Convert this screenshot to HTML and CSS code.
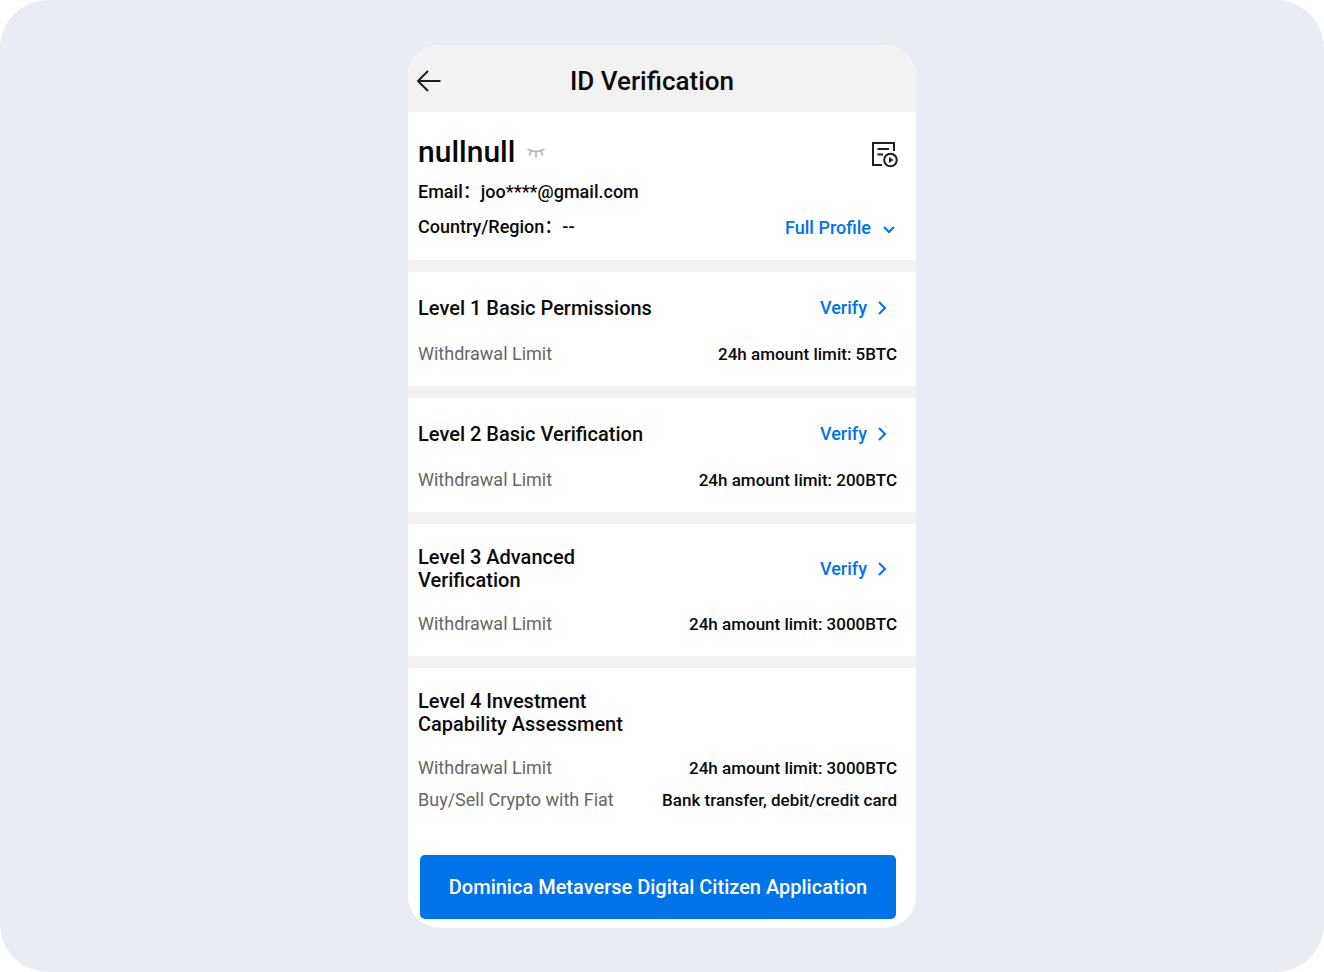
FILE: index.html
```
<!DOCTYPE html>
<html lang="en">
<head>
    <meta charset="UTF-8">
    <meta name="viewport" content="width=device-width, initial-scale=1.0">
    <title>ID Verification</title>
    <link rel="stylesheet" href="styles.css">
</head>
<body>
    <div class="page">
        <main class="phone">
            <header class="top-bar">
                <button type="button" class="icon-button" aria-label="Back">
                    <svg width="26" height="24" viewBox="0 0 26 24" fill="none" stroke="#1e1e1e" stroke-width="2">
                        <path d="M24.500 12H2M12 2L2 12l10 10"/>
                    </svg>
                </button>
                <h1>ID Verification</h1>
            </header>

            <section class="profile">
                <div class="profile-row">
                    <div class="profile-name">
                        <h2>nullnull</h2>
                        <button type="button" class="icon-button" aria-label="Show name">
                            <svg width="20" height="14" viewBox="1 -2 20 14" fill="none" stroke="#b9bcc1" stroke-width="2">
                                <path d="M1.500 2q8.500 5 17 0M5 4L3.500 8.500M10 5v5.500M15 4l1.500 4.500"/>
                            </svg>
                        </button>
                    </div>
                    <button type="button" class="icon-button" aria-label="Verification records">
                        <svg width="28" height="32" viewBox="1 -4 28 32" fill="none" stroke="#1e1e1e" stroke-width="2">
                            <path d="M13 25H4V3h21v8M8.500 9H20M8.500 14.500H14"/>
                            <circle cx="21.500" cy="20" r="6.300"/>
                            <path d="M20 17l4.500 3-4.500 3z" fill="#1e1e1e" stroke="none"/>
                        </svg>
                    </button>
                </div>
                <p class="profile-line">Email：joo****@gmail.com</p>
                <div class="profile-row">
                    <p class="profile-line">Country/Region：--</p>
                    <button type="button" class="full-profile">
                        Full Profile
                        <svg width="12" height="12" viewBox="0 -4 12 12" fill="none" stroke="currentColor" stroke-width="2">
                            <path d="M1 1l5 5 5-5"/>
                        </svg>
                    </button>
                </div>
            </section>

            <section class="level">
                <div class="level-head">
                    <h3>Level 1 Basic Permissions</h3>
                    <a href="#" class="verify">Verify
                        <svg width="10" height="14" viewBox="0 0 10 14" fill="none" stroke="currentColor" stroke-width="2">
                            <path d="M2 1l6 6-6 6"/>
                        </svg>
                    </a>
                </div>
                <dl class="limits">
                    <div class="limit"><dt>Withdrawal Limit</dt><dd>24h amount limit: 5BTC</dd></div>
                </dl>
            </section>

            <section class="level">
                <div class="level-head">
                    <h3>Level 2 Basic Verification</h3>
                    <a href="#" class="verify">Verify
                        <svg width="10" height="14" viewBox="0 0 10 14" fill="none" stroke="currentColor" stroke-width="2">
                            <path d="M2 1l6 6-6 6"/>
                        </svg>
                    </a>
                </div>
                <dl class="limits">
                    <div class="limit"><dt>Withdrawal Limit</dt><dd>24h amount limit: 200BTC</dd></div>
                </dl>
            </section>

            <section class="level">
                <div class="level-head">
                    <h3>Level 3 Advanced Verification</h3>
                    <a href="#" class="verify">Verify
                        <svg width="10" height="14" viewBox="0 0 10 14" fill="none" stroke="currentColor" stroke-width="2">
                            <path d="M2 1l6 6-6 6"/>
                        </svg>
                    </a>
                </div>
                <dl class="limits">
                    <div class="limit"><dt>Withdrawal Limit</dt><dd>24h amount limit: 3000BTC</dd></div>
                </dl>
            </section>

            <section class="level">
                <div class="level-head">
                    <h3>Level 4 Investment Capability Assessment</h3>
                </div>
                <dl class="limits">
                    <div class="limit"><dt>Withdrawal Limit</dt><dd>24h amount limit: 3000BTC</dd></div>
                    <div class="limit"><dt>Buy/Sell Crypto with Fiat</dt><dd>Bank transfer, debit/credit card</dd></div>
                </dl>
            </section>

            <div class="actions">
                <button type="button" class="apply">Dominica Metaverse Digital Citizen Application</button>
            </div>
        </main>
    </div>
</body>
</html>
```
FILE: styles.css
```
* {
    box-sizing: border-box;
    margin: 0;
    padding: 0;
}

body {
    font-family: Roboto, "Noto Sans CJK SC", sans-serif;
    font-size: 18px;
    font-weight: 500;
    line-height: 20px;
    color: #0a0a0a;
    background: #fff;
}

button {
    font: inherit;
    border: none;
    background: none;
    cursor: pointer;
}

svg {
    display: block;
}

h1, h2, h3 {
    font-weight: 500;
}

.page {
    min-height: 100vh;
    padding: 45px 16px 44px;
    background: #e9ecf4;
    border-radius: 48px;
}

.phone {
    max-width: 508px;
    margin: 0 auto;
    background: #fff;
    border-radius: 32px;
    overflow: hidden;
}

.top-bar {
    display: flex;
    align-items: center;
    padding: 20px 54px 15px 8px;
    background: #f2f2f2;
}

.top-bar h1 {
    flex: 1;
    font-size: 26px;
    line-height: 32px;
    text-align: center;
}

/* Profile */
.profile {
    padding: 22px 18px 20px 10px;
}

.profile-row,
.profile-name {
    display: flex;
    align-items: center;
}

.profile-row {
    justify-content: space-between;
}

.profile-name {
    gap: 12px;
}

.profile-name h2 {
    font-size: 30px;
    line-height: 36px;
}

.profile-line {
    margin: 12px 0 3px;
}

.full-profile {
    display: flex;
    align-items: center;
    gap: 12px;
    padding: 10px 3px 0 0;
    color: #0073e8;
}

/* Levels */
.level {
    padding: 22px 19px 22px 10px;
    border-top: 12px solid #f2f2f2;
}

.level-head {
    display: flex;
    justify-content: space-between;
    align-items: center;
    min-height: 28px;
    margin-bottom: 22px;
}

.level-head h3 {
    max-width: 52%;
    font-size: 20px;
    line-height: 23px;
}

.verify {
    display: flex;
    align-items: center;
    gap: 10px;
    padding-right: 10px;
    color: #0073e8;
    text-decoration: none;
}

.limits {
    display: grid;
    gap: 12px;
}

.limit {
    display: flex;
    justify-content: space-between;
}

.limit dt {
    font-weight: 400;
    color: #666;
}

.limit dd {
    font-size: 17px;
}

.actions {
    padding: 23px 20px 9px 12px;
}

.apply {
    width: 100%;
    padding: 20px 8px;
    font-size: 20px;
    line-height: 24px;
    color: #fff;
    background: #0073e8;
    border-radius: 5px;
}
```
